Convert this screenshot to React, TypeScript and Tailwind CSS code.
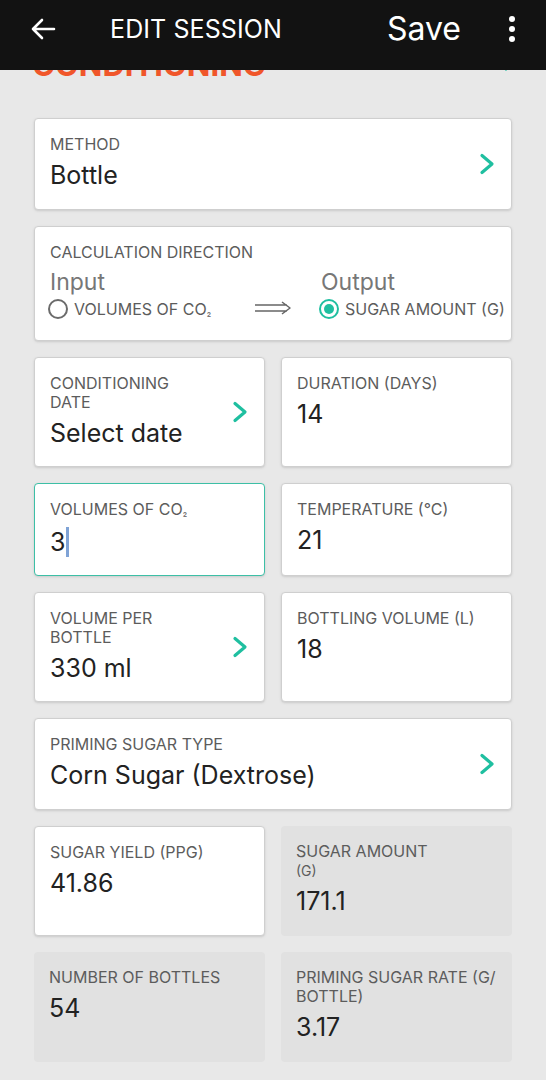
import React from "react";

const Chevron = () => (
  <svg width="16" height="22" viewBox="0 0 16 22" className="shrink-0">
    <polyline
      points="3,2.5 13,11 3,19.5"
      fill="none"
      stroke="#1fbfa0"
      strokeWidth="3.2"
      strokeLinecap="round"
      strokeLinejoin="round"
    />
  </svg>
);

type FieldProps = {
  label: React.ReactNode;
  value: React.ReactNode;
  chevron?: boolean;
  readOnly?: boolean;
  focused?: boolean;
  className?: string;
};

const Field = ({ label, value, chevron, readOnly, focused, className = "" }: FieldProps) => {
  const box = readOnly
    ? "bg-[#e1e1e1]"
    : focused
    ? "bg-white border border-[#3dbfa6] shadow-sm"
    : "bg-white border border-[#cfcfcf] shadow-sm";
  return (
    <div className={`flex items-center rounded-[4px] pl-[15px] pr-[16px] ${box} ${className}`}>
      <div className="flex flex-col self-start flex-1 min-w-0 pt-[16px]">
        <div className="text-[16px] leading-[19px] text-[#5c5c5c] uppercase">{label}</div>
        <div className="text-[25px] leading-[32px] text-[#222] mt-[5px]">{value}</div>
      </div>
      {chevron && <Chevron />}
    </div>
  );
};

const Radio = ({ checked }: { checked?: boolean }) => (
  <span
    className={`w-[20px] h-[20px] rounded-full border-2 flex items-center justify-center shrink-0 ${
      checked ? "border-[#1fbfa0]" : "border-[#6b6b6b]"
    }`}
  >
    {checked && <span className="w-[10px] h-[10px] rounded-full bg-[#1fbfa0]" />}
  </span>
);

const App: React.FC = () => {
  return (
    <div
      className="w-[546px] h-[1080px] overflow-hidden bg-[#e8e8e8] flex flex-col"
      style={{ fontFamily: "Inter, 'Liberation Sans', sans-serif" }}
    >
      <div className="relative z-10 h-[70px] bg-[#121212] flex items-start pt-[14px] pl-[30px] text-white shrink-0">
        <div className="h-[30px] flex items-center">
          <svg width="26" height="22" viewBox="0 0 26 22">
            <path
              d="M24 11H3 M12 2L3 11L12 20"
              fill="none"
              stroke="white"
              strokeWidth="2.6"
              strokeLinecap="round"
              strokeLinejoin="round"
            />
          </svg>
        </div>
        <span className="ml-[54px] text-[25px] leading-[30px] tracking-[0.1px]">EDIT SESSION</span>
        <span className="ml-auto text-[32px] leading-[30px]">Save</span>
        <span className="ml-[48px] mr-[31px] mt-[2px] flex flex-col gap-[4px]">
          <span className="w-[6px] h-[6px] rounded-full bg-white" />
          <span className="w-[6px] h-[6px] rounded-full bg-white" />
          <span className="w-[6px] h-[6px] rounded-full bg-white" />
        </span>
      </div>

      <div className="flex flex-col px-[34px]">
        <div className="flex items-end justify-between mt-[-31px] h-[44px]">
          <span className="text-[31px] font-bold text-[#f0562a] leading-[36px] ml-[-2px]">
            CONDITIONING
          </span>
          <svg width="18" height="12" viewBox="0 0 18 12" className="mb-[10px] mr-[-3px]">
            <polyline
              points="3,2 9,8 15,2"
              fill="none"
              stroke="#1fbfa0"
              strokeWidth="3"
              strokeLinecap="round"
            />
          </svg>
        </div>

        <div className="flex flex-col gap-[16px] mt-[35px]">
          <Field label="Method" value="Bottle" chevron className="h-[92px]" />

          <div className="bg-white border border-[#cfcfcf] shadow-sm rounded-[4px] h-[115px] pl-[13px] pt-[16px] flex flex-col">
            <div className="text-[16px] leading-[19px] text-[#5c5c5c] pl-[2px]">CALCULATION DIRECTION</div>
            <div className="flex mt-[7px]">
              <div className="flex flex-col w-[206px]">
                <span className="text-[23px] leading-[26px] text-[#777] pl-[2px]">Input</span>
                <div className="flex items-center gap-[6px] mt-[2px]">
                  <Radio />
                  <span className="text-[16px] text-[#5c5c5c]">
                    VOLUMES OF CO<span className="text-[10px]">₂</span>
                  </span>
                </div>
              </div>
              <div className="flex items-end pb-[6px] w-[65px]">
                <svg width="38" height="14" viewBox="0 0 38 14">
                  <path
                    d="M1 4H33 M1 10H33 M28 1L36 7L28 13"
                    fill="none"
                    stroke="#666"
                    strokeWidth="1.5"
                    strokeLinejoin="round"
                  />
                </svg>
              </div>
              <div className="flex flex-col">
                <span className="text-[23px] leading-[26px] text-[#777] pl-[2px]">Output</span>
                <div className="flex items-center gap-[6px] mt-[2px]">
                  <Radio checked />
                  <span className="text-[16px] text-[#5c5c5c]">SUGAR AMOUNT (G)</span>
                </div>
              </div>
            </div>
          </div>

          <div className="grid grid-cols-2 gap-[16px]">
            <Field
              label={
                <>
                  Conditioning
                  <br />
                  Date
                </>
              }
              value="Select date"
              chevron
              className="h-[110px]"
            />
            <Field label="Duration (days)" value="14" className="h-[110px]" />
          </div>

          <div className="grid grid-cols-2 gap-[16px]">
            <Field
              label={
                <>
                  VOLUMES OF CO<span className="text-[10px]">₂</span>
                </>
              }
              value={
                <span className="flex items-center">
                  3<span className="inline-block w-[3px] h-[30px] bg-[#7fa3d6] ml-[1px]" />
                </span>
              }
              focused
              className="h-[93px]"
            />
            <Field label="Temperature (°C)" value="21" className="h-[93px]" />
          </div>

          <div className="grid grid-cols-2 gap-[16px]">
            <Field
              label={
                <>
                  Volume per
                  <br />
                  Bottle
                </>
              }
              value="330 ml"
              chevron
              className="h-[110px]"
            />
            <Field label="Bottling volume (L)" value="18" className="h-[110px]" />
          </div>

          <Field label="Priming sugar type" value="Corn Sugar (Dextrose)" chevron className="h-[92px]" />

          <div className="grid grid-cols-2 gap-[16px]">
            <Field label="Sugar yield (PPG)" value="41.86" className="h-[110px]" />
            <Field
              label={
                <>
                  Sugar amount
                  <br />
                  <span className="text-[14px]">(G)</span>
                </>
              }
              value="171.1"
              readOnly
              className="h-[110px]"
            />
          </div>

          <div className="grid grid-cols-2 gap-[16px]">
            <Field label="Number of bottles" value="54" readOnly className="h-[110px]" />
            <Field
              label={
                <>
                  Priming sugar rate (G/
                  <br />
                  Bottle)
                </>
              }
              value="3.17"
              readOnly
              className="h-[110px]"
            />
          </div>
        </div>
      </div>
    </div>
  );
};

export default App;
